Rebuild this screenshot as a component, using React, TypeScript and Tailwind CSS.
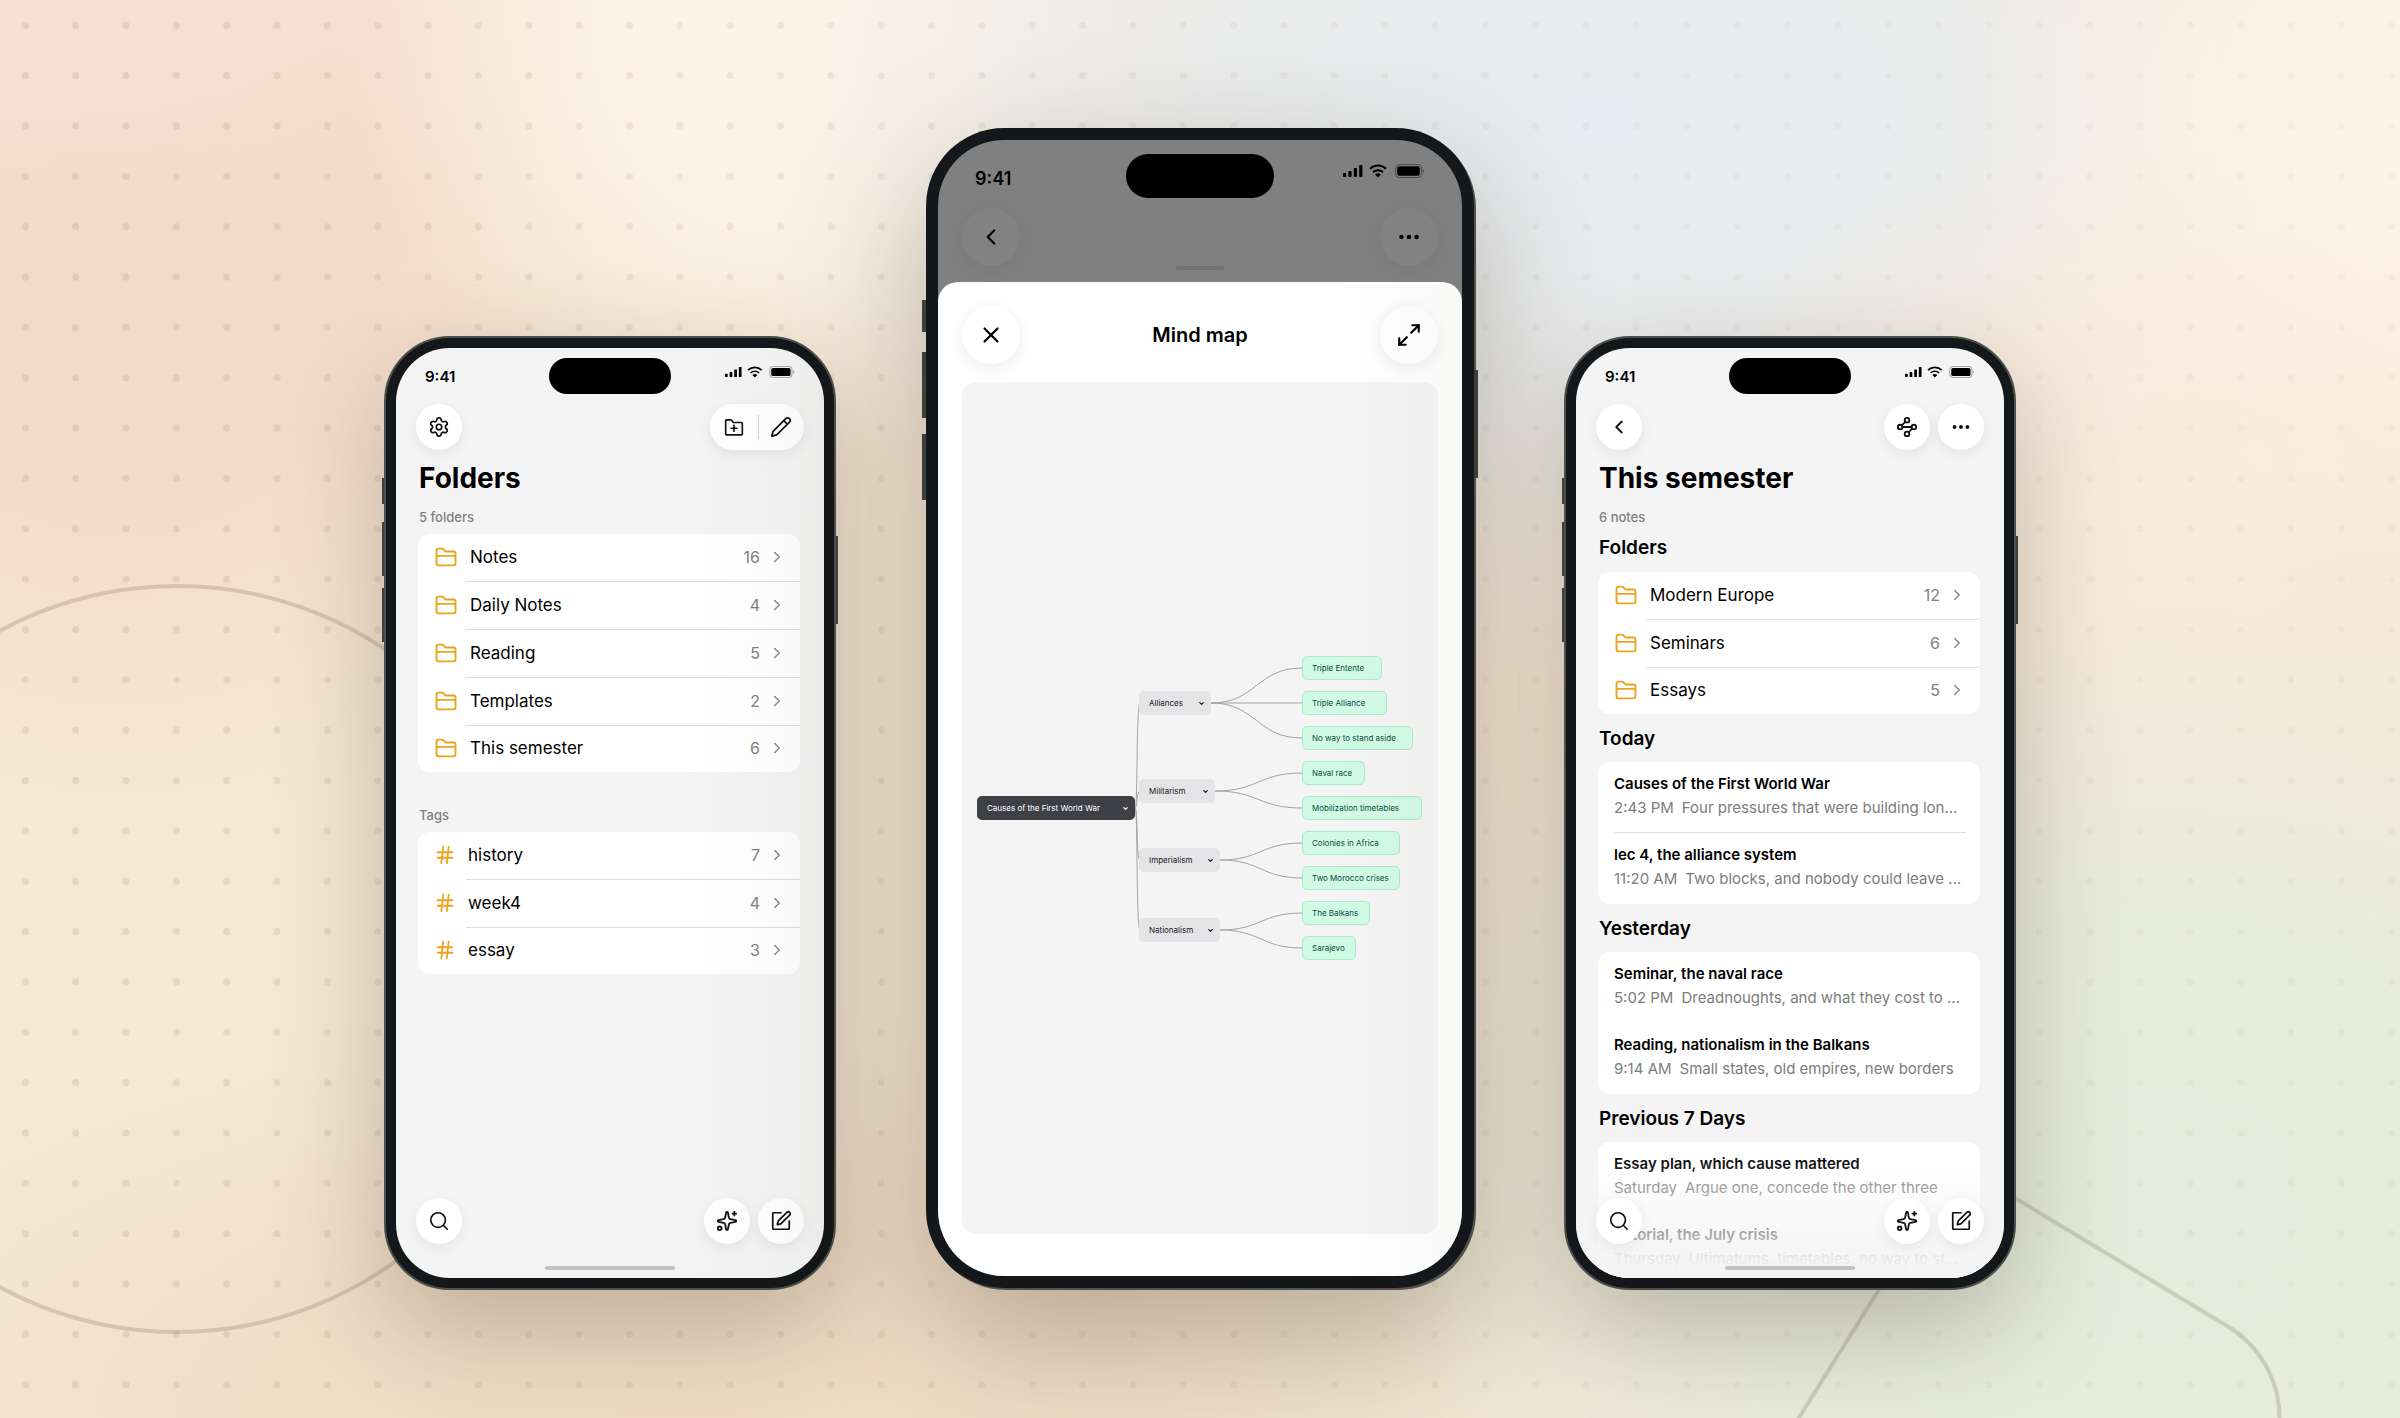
import type { ReactNode } from "react";
import {
  ChevronDown,
  ChevronLeft,
  ChevronRight,
  Ellipsis,
  Hash,
  Maximize2,
  Pencil,
  Search,
  Settings,
  Sparkles,
  Waypoints,
  X,
} from "lucide-react";

/* ---------- icons ---------- */

function FolderIcon() {
  return (
    <svg viewBox="0 0 24 24" className="size-6 shrink-0 text-[#eda31e]" fill="none" stroke="currentColor" strokeWidth="1.9" strokeLinejoin="round" aria-hidden="true">
      <path d="M2.5 18.35V5.65a2 2 0 0 1 2-2h3.4c.7 0 1.3.3 1.7.8l1 1.3c.4.5 1 .8 1.7.8h7.2a2 2 0 0 1 2 2v9.8a2 2 0 0 1-2 2h-15a2 2 0 0 1-2-2z" />
      <path d="M2.5 10.9h19" />
    </svg>
  );
}

function FolderAddIcon() {
  return (
    <svg viewBox="0 0 24 24" className="size-5" fill="none" stroke="currentColor" strokeWidth="2" strokeLinecap="round" strokeLinejoin="round" aria-hidden="true">
      <path d="M2 20.4V4.4a1 1 0 0 1 1-1h5.3a1 1 0 0 1 .8.4l1.8 2.4a1 1 0 0 0 .8.4H21a1 1 0 0 1 1 1v12.8a1 1 0 0 1-1 1H3a1 1 0 0 1-1-1z" />
      <path d="M12 10v7M8.5 13.5h7" />
    </svg>
  );
}

function ComposeIcon() {
  return (
    <svg viewBox="0 0 24 24" className="size-[22px]" fill="none" stroke="currentColor" strokeWidth="1.9" strokeLinecap="round" strokeLinejoin="round" aria-hidden="true">
      <path d="M12 3H3.8a.8.8 0 0 0-.8.8v16.4a.8.8 0 0 0 .8.8h16.4a.8.8 0 0 0 .8-.8V12" />
      <path d="M18.375 2.625a1 1 0 0 1 3 3l-9.013 9.014a2 2 0 0 1-.853.505l-2.873.84a.5.5 0 0 1-.62-.62l.84-2.873a2 2 0 0 1 .506-.852z" />
    </svg>
  );
}

function StatusIcons({ className }: { className: string }) {
  return (
    <svg viewBox="0 0 82 14" className={className} fill="currentColor" aria-hidden="true">
      <rect x="0" y="9" width="3.2" height="4" rx="0.8" />
      <rect x="5.4" y="7" width="3.2" height="6" rx="0.8" />
      <rect x="10.8" y="4" width="3.2" height="9" rx="0.8" />
      <rect x="16.2" y="1" width="3.2" height="12" rx="0.8" />
      <g fill="none" stroke="currentColor" strokeWidth="1.9">
        <path d="M27 4.8a11.5 11.5 0 0 1 16 0" />
        <path d="M30 8.2a7.2 7.2 0 0 1 10 0" />
      </g>
      <path d="M35 13.4l-2.9-2.8a4.2 4.2 0 0 1 5.8 0z" />
      <rect x="52.5" y="0.5" width="26" height="13" rx="3.5" fill="none" stroke="currentColor" opacity="0.4" />
      <rect x="54.2" y="2.2" width="22.6" height="9.6" rx="2" />
      <path d="M80 5v4a2.3 2.3 0 0 0 0-4z" opacity="0.4" />
    </svg>
  );
}

/* ---------- backdrop ---------- */

const glows = [
  { id: "pink", cx: 120, cy: 230, rx: 560, ry: 600, color: "#f3d8c8", o: 0.95 },
  { id: "rose", cx: 60, cy: 0, rx: 520, ry: 260, color: "#fae2d7", o: 0.6 },
  { id: "cream", cx: 790, cy: 40, rx: 440, ry: 420, color: "#fdf6ea", o: 0.9 },
  { id: "blue", cx: 1600, cy: 120, rx: 900, ry: 560, color: "#e7ecf0", o: 1 },
  { id: "ivory", cx: 2400, cy: 120, rx: 460, ry: 460, color: "#fdf4e8", o: 0.95 },
  { id: "peach", cx: 2120, cy: 500, rx: 440, ry: 360, color: "#fbebdc", o: 0.8 },
  { id: "sand", cx: 700, cy: 1418, rx: 1000, ry: 420, color: "#ecd8be", o: 0.75 },
  { id: "green", cx: 2150, cy: 1220, rx: 940, ry: 700, color: "#e4ecdd", o: 1 },
];

function Backdrop() {
  return (
    <svg viewBox="0 0 2400 1418" preserveAspectRatio="xMidYMid slice" className="absolute inset-0 size-full" aria-hidden="true">
      <defs>
        {glows.map((g) => (
          <radialGradient key={g.id} id={g.id}>
            <stop offset="0" stopColor={g.color} stopOpacity={g.o} />
            <stop offset="0.45" stopColor={g.color} stopOpacity={g.o * 0.8} />
            <stop offset="0.75" stopColor={g.color} stopOpacity={g.o * 0.3} />
            <stop offset="1" stopColor={g.color} stopOpacity="0" />
          </radialGradient>
        ))}
        <pattern id="dots" width="50.35" height="50.35" patternUnits="userSpaceOnUse">
          <circle cx="25.3" cy="25.3" r="3.5" fill="#6b4a38" />
        </pattern>
        <linearGradient id="fade">
          <stop offset="0" stopColor="#fff" stopOpacity="0.12" />
          <stop offset="0.4" stopColor="#fff" stopOpacity="0.08" />
          <stop offset="0.7" stopColor="#fff" stopOpacity="0.04" />
          <stop offset="1" stopColor="#fff" stopOpacity="0.04" />
        </linearGradient>
        <mask id="dotFade">
          <rect width="2400" height="1418" fill="url(#fade)" />
        </mask>
      </defs>
      <rect width="2400" height="1418" fill="#f6e8d5" />
      {glows.map((g) => (
        <ellipse key={g.id} cx={g.cx} cy={g.cy} rx={g.rx} ry={g.ry} fill={`url(#${g.id})`} />
      ))}
      <rect width="2400" height="1418" fill="url(#dots)" mask="url(#dotFade)" />
      <g fill="none" stroke="#5c4630" strokeOpacity="0.19" strokeWidth="4">
        <circle cx="177" cy="959" r="373" />
        <path d="M1760 1480L1930 1208Q1955 1161 2005 1192L2232 1329C2264 1351 2283 1387 2279 1430" />
      </g>
    </svg>
  );
}

/* ---------- shared parts ---------- */

function RoundButton({ label, children }: { label: string; children: ReactNode }) {
  return (
    <button type="button" aria-label={label} className="flex size-[46px] shrink-0 items-center justify-center rounded-full bg-white text-[#111] shadow-[0_4px_14px_rgba(0,0,0,0.07)]">
      {children}
    </button>
  );
}

function Phone({ label, children }: { label: string; children: ReactNode }) {
  return (
    <section aria-label={label} className="relative shrink-0 rounded-[66px] border-2 border-[#4d504a] bg-[#14181a] p-2.5 shadow-[0_40px_110px_rgba(75,60,45,0.3)]">
      <span className="absolute top-[140px] -left-1 h-[26px] w-0.5 bg-[#3c403c]" />
      <span className="absolute top-[184px] -left-1 h-[54px] w-0.5 bg-[#3c403c]" />
      <span className="absolute top-[250px] -left-1 h-[54px] w-0.5 bg-[#3c403c]" />
      <span className="absolute top-[198px] -right-1 h-[88px] w-0.5 bg-[#3c403c]" />
      <div className="relative flex h-[930px] w-[428px] flex-col overflow-hidden rounded-[54px] bg-[#f4f4f4]">
        <header className="flex h-14 shrink-0 items-start justify-between px-[29px] pt-2.5">
          <span className="mt-2 w-[88px] text-[15px] leading-[22px] font-semibold">9:41</span>
          <span className="h-9 w-[122px] rounded-full bg-black" />
          <span className="mt-2 flex w-[88px] justify-end">
            <StatusIcons className="h-3 w-[70px]" />
          </span>
        </header>
        {children}
      </div>
    </section>
  );
}

function BottomBar() {
  return (
    <>
      <div className="absolute inset-x-5 bottom-[34px] flex gap-2">
        <RoundButton label="Search">
          <Search size={22} strokeWidth={1.8} />
        </RoundButton>
        <span className="grow" />
        <RoundButton label="Ask AI">
          <Sparkles size={22} strokeWidth={2} />
        </RoundButton>
        <RoundButton label="New note">
          <ComposeIcon />
        </RoundButton>
      </div>
      <span className="absolute bottom-2 left-1/2 h-1 w-[130px] -translate-x-1/2 rounded-full bg-[#c2c1c0]" />
    </>
  );
}

type Item = { name: string; count: number };

function ItemList({ items, tag = false }: { items: Item[]; tag?: boolean }) {
  return (
    <ul className="mr-6 ml-[22px] shrink-0 overflow-hidden rounded-xl bg-white">
      {items.map((item) => (
        <li key={item.name} className="group relative h-12 last:h-[46px]">
          <button type="button" className="flex size-full items-center gap-3 pr-3.5 pb-[3px] pl-4 text-left">
            {tag ? <Hash size={22} strokeWidth={2} className="text-[#eda31e]" /> : <FolderIcon />}
            <span className="grow text-[17px] leading-6">{item.name}</span>
            <span className="text-base leading-6 text-[#808080]">{item.count}</span>
            <ChevronRight size={18} strokeWidth={2} className="-ml-1 text-[#8a8a8a]" />
          </button>
          <span className="absolute right-0 bottom-0 left-12 h-px bg-[#dedede] group-last:hidden" />
        </li>
      ))}
    </ul>
  );
}

/* ---------- screens ---------- */

const folders: Item[] = [
  { name: "Notes", count: 16 },
  { name: "Daily Notes", count: 4 },
  { name: "Reading", count: 5 },
  { name: "Templates", count: 2 },
  { name: "This semester", count: 6 },
];

const tags: Item[] = [
  { name: "history", count: 7 },
  { name: "week4", count: 4 },
  { name: "essay", count: 3 },
];

function FoldersScreen() {
  return (
    <Phone label="Folders">
      <div className="flex shrink-0 items-center justify-between px-5">
        <RoundButton label="Settings">
          <Settings size={22} strokeWidth={1.9} />
        </RoundButton>
        <div className="flex h-[46px] items-center rounded-full bg-white text-[#111] shadow-[0_4px_14px_rgba(0,0,0,0.07)]">
          <button type="button" aria-label="New folder" className="flex h-full w-12 items-center justify-center">
            <FolderAddIcon />
          </button>
          <span className="h-6 w-px bg-[#d4d4d4]" />
          <button type="button" aria-label="Edit" className="flex h-full w-[45px] items-center justify-center pr-0.5">
            <Pencil size={22} strokeWidth={1.9} />
          </button>
        </div>
      </div>
      <h1 className="mt-3 px-[23px] text-[28px] leading-8 font-bold">Folders</h1>
      <p className="mt-3.5 mb-2 px-[23px] text-[13px] leading-[18px] font-medium text-[#808080]">5 folders</p>
      <ItemList items={folders} />
      <h2 className="mt-[34px] mb-2 px-[23px] text-[13px] leading-[18px] font-medium text-[#808080]">Tags</h2>
      <ItemList items={tags} tag />
      <BottomBar />
      <span className="pointer-events-none absolute inset-0 bg-linear-to-r from-transparent from-65% to-[#5a4a30]/3" />
    </Phone>
  );
}

const notes = [
  {
    heading: "Today",
    divided: true,
    items: [
      { title: "Causes of the First World War", when: "2:43 PM", text: "Four pressures that were building long before 1914" },
      { title: "lec 4, the alliance system", when: "11:20 AM", text: "Two blocks, and nobody could leave either one" },
    ],
  },
  {
    heading: "Yesterday",
    divided: false,
    items: [
      { title: "Seminar, the naval race", when: "5:02 PM", text: "Dreadnoughts, and what they cost to build" },
      { title: "Reading, nationalism in the Balkans", when: "9:14 AM", text: "Small states, old empires, new borders" },
    ],
  },
  {
    heading: "Previous 7 Days",
    divided: false,
    items: [
      { title: "Essay plan, which cause mattered", when: "Saturday", text: "Argue one, concede the other three" },
      { title: "Tutorial, the July crisis", when: "Thursday", text: "Ultimatums, timetables, no way to stop it" },
    ],
  },
];

function SemesterScreen() {
  return (
    <Phone label="This semester">
      <div className="flex shrink-0 gap-2 px-5">
        <RoundButton label="Back">
          <ChevronLeft size={22} strokeWidth={2} />
        </RoundButton>
        <span className="grow" />
        <RoundButton label="Mind map">
          <Waypoints size={22} strokeWidth={2} />
        </RoundButton>
        <RoundButton label="More">
          <Ellipsis size={22} strokeWidth={2.2} />
        </RoundButton>
      </div>
      <h1 className="mt-3 px-[23px] text-[28px] leading-8 font-bold">This semester</h1>
      <p className="mt-3.5 px-[23px] text-[13px] leading-[18px] font-medium text-[#808080]">6 notes</p>
      <h2 className="mt-[9px] mb-[11px] px-[23px] text-[19px] leading-[26px] font-semibold">Folders</h2>
      <ItemList
        items={[
          { name: "Modern Europe", count: 12 },
          { name: "Seminars", count: 6 },
          { name: "Essays", count: 5 },
        ]}
      />
      {notes.map((group) => (
        <div key={group.heading} className="shrink-0">
          <h2 className="px-[23px] pt-3 pb-2.5 text-[19px] leading-[26px] font-semibold">{group.heading}</h2>
          <ul className="mr-6 ml-[22px] rounded-xl bg-white pr-3.5 pl-4">
            {group.items.map((n, i) => (
              <li key={n.title} className={group.divided && i === 0 ? "h-[71px] border-b border-[#dedede] pt-3" : "h-[71px] pt-3"}>
                <h3 className="truncate text-[15px] leading-5 font-semibold">{n.title}</h3>
                <p className="mt-1 truncate text-[15px] leading-5 text-[#7c7c7c]">
                  <span className="mr-2">{n.when}</span>
                  {n.text}
                </p>
              </li>
            ))}
          </ul>
        </div>
      ))}
      <span className="pointer-events-none absolute inset-x-0 bottom-0 h-[124px] bg-linear-to-b from-[#f4f4f4]/0 to-[#f4f4f4] to-95%" />
      <BottomBar />
    </Phone>
  );
}

/* ---------- mind map ---------- */

const ROOT_Y = 152;

const branches = [
  { name: "Alliances", y: 47, w: 72, leaves: [{ name: "Triple Entente", y: 12, w: 80 }, { name: "Triple Alliance", y: 47, w: 85 }, { name: "No way to stand aside", y: 82, w: 111 }] },
  { name: "Militarism", y: 135, w: 76, leaves: [{ name: "Naval race", y: 117, w: 63 }, { name: "Mobilization timetables", y: 152, w: 120 }] },
  { name: "Imperialism", y: 204, w: 81, leaves: [{ name: "Colonies in Africa", y: 187, w: 98 }, { name: "Two Morocco crises", y: 222, w: 98 }] },
  { name: "Nationalism", y: 274, w: 81, leaves: [{ name: "The Balkans", y: 257, w: 68 }, { name: "Sarajevo", y: 292, w: 54 }] },
];

function MindMap() {
  return (
    <div className="relative h-[304px] w-[476px] shrink-0 text-[8px] leading-3">
      <svg viewBox="0 0 476 304" className="absolute inset-0 size-full" fill="none" stroke="#a3a3a8" aria-hidden="true">
        {branches.map((b) => {
          const x = 177 + b.w;
          const mid = (x + 340) / 2;
          return (
            <g key={b.name}>
              <path d={`M173 ${ROOT_Y}C176 ${ROOT_Y} 174 ${b.y} 178 ${b.y}`} />
              {b.leaves.map((l) => (
                <path key={l.name} d={`M${x} ${b.y}C${mid} ${b.y} ${mid} ${l.y} 340 ${l.y}`} />
              ))}
            </g>
          );
        })}
      </svg>
      <button type="button" className="absolute left-[15px] flex h-6 w-[158px] items-center justify-between rounded-[5px] bg-[#3f3f46] pr-1.5 pl-2.5 text-white" style={{ top: ROOT_Y - 12 }}>
        Causes of the First World War
        <ChevronDown size={7} strokeWidth={4} />
      </button>
      {branches.map((b) => (
        <button key={b.name} type="button" className="absolute left-[177px] flex h-6 items-center justify-between rounded-[5px] bg-[#e4e4e7] pr-1.5 pl-2.5 text-[#18181b]" style={{ top: b.y - 12, width: b.w }}>
          {b.name}
          <ChevronDown size={7} strokeWidth={4} />
        </button>
      ))}
      {branches.flatMap((b) => b.leaves).map((l) => (
        <div key={l.name} className="absolute left-[340px] flex h-6 items-center rounded-[5px] border border-[#abeace] bg-[#d1fae5] pl-[9px] whitespace-nowrap text-[#064e3b]" style={{ top: l.y - 12, width: l.w }}>
          {l.name}
        </div>
      ))}
    </div>
  );
}

function MindMapScreen() {
  return (
    <section aria-label="Mind map" className="relative mb-0.5 shrink-0 rounded-[78px] bg-[#14181a] p-3 shadow-[2px_2px_0_#51524c,0_50px_130px_rgba(75,60,45,0.34)]">
      <span className="absolute top-[172px] -left-1 h-8 w-1 bg-[#3c403c]" />
      <span className="absolute top-[224px] -left-1 h-[66px] w-1 bg-[#3c403c]" />
      <span className="absolute top-[306px] -left-1 h-[66px] w-1 bg-[#3c403c]" />
      <span className="absolute top-[242px] -right-1 h-[108px] w-1 bg-[#3c403c]" />
      <div className="relative flex h-[1136px] w-[524px] flex-col overflow-hidden rounded-[66px] bg-[#808080]">
        <header className="flex h-[68px] shrink-0 items-start justify-between px-[37px] pt-3.5">
          <span className="mt-3 w-[100px] text-[18px] leading-[26px] font-semibold">9:41</span>
          <span className="h-11 w-[148px] rounded-full bg-black" />
          <span className="mt-2.5 flex w-[100px] justify-end">
            <StatusIcons className="h-3.5 w-[82px]" />
          </span>
        </header>
        <div className="flex shrink-0 justify-between px-6">
          <button type="button" aria-label="Back" className="flex size-[58px] items-center justify-center rounded-full bg-[#828282] shadow-[0_4px_18px_rgba(0,0,0,0.07)]">
            <ChevronLeft size={26} strokeWidth={2} />
          </button>
          <button type="button" aria-label="More" className="flex size-[58px] items-center justify-center rounded-full bg-[#828282] shadow-[0_4px_18px_rgba(0,0,0,0.07)]">
            <Ellipsis size={26} strokeWidth={2.2} />
          </button>
        </div>
        <span className="mx-auto h-1 w-12 shrink-0 rounded-full bg-[#727272]" />
        <div className="mt-3 flex grow flex-col rounded-t-[20px] bg-white px-6 pt-6 pb-[42px]">
          <div className="flex items-center justify-between">
            <button type="button" aria-label="Close" className="flex size-[58px] items-center justify-center rounded-full bg-white shadow-[0_4px_18px_rgba(0,0,0,0.08)]">
              <X size={26} strokeWidth={2} />
            </button>
            <h1 className="text-xl leading-7 font-semibold">Mind map</h1>
            <button type="button" aria-label="Expand" className="flex size-[58px] items-center justify-center rounded-full bg-white shadow-[0_4px_18px_rgba(0,0,0,0.08)]">
              <Maximize2 size={26} strokeWidth={2} />
            </button>
          </div>
          <div className="mt-[18px] flex grow items-center justify-center overflow-hidden rounded-[14px] bg-[#f4f4f4]">
            <MindMap />
          </div>
        </div>
        <span className="pointer-events-none absolute inset-x-0 top-[142px] bottom-0 bg-linear-to-r from-transparent from-75% to-[#5a4a30]/3" />
      </div>
    </section>
  );
}

export default function App() {
  return (
    <main className="relative flex min-h-screen items-end justify-center gap-[90px] overflow-hidden pb-32 font-['Inter','Liberation_Sans',sans-serif] text-black">
      <Backdrop />
      <FoldersScreen />
      <MindMapScreen />
      <SemesterScreen />
    </main>
  );
}
